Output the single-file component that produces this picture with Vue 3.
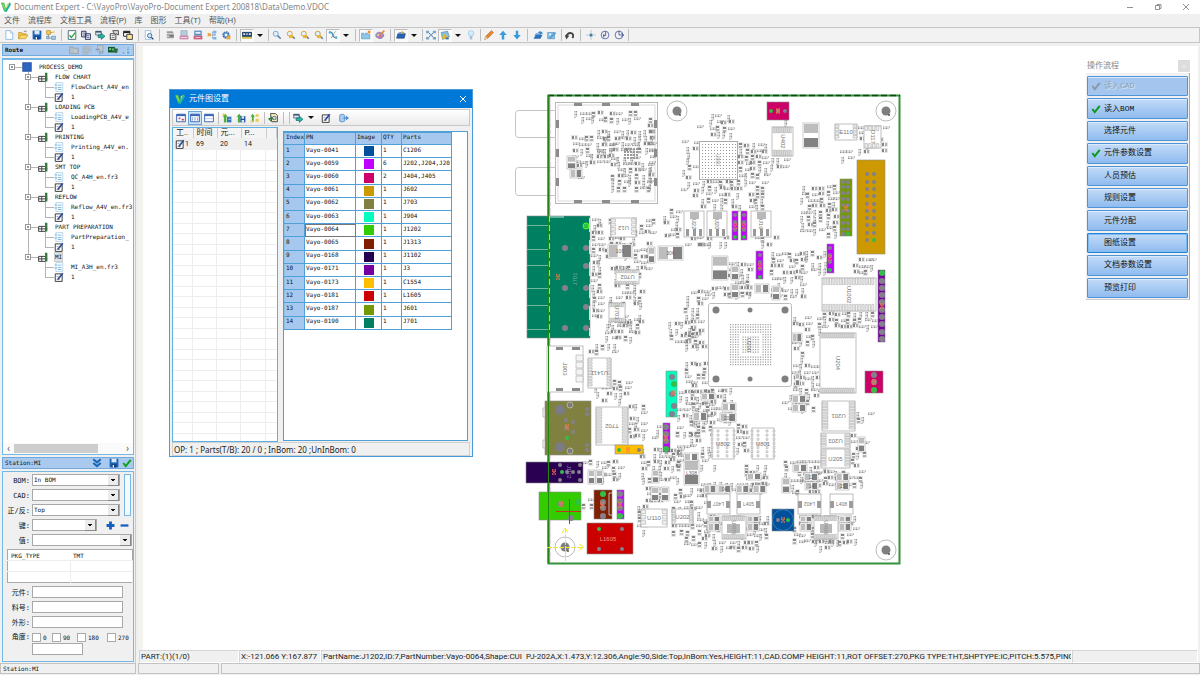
<script setup>
import { ref } from 'vue'

const menus = ['文件', '流程库', '文档工具', '流程(P)', '库', '图形', '工具(T)', '帮助(H)']

/* ---------- icons, drawn on a 16 x 16 grid ---------- */
const lens = (c, extra = '') =>
  `<circle cx="6" cy="6" r="4" fill="#e4f1fa" stroke="${c}" stroke-width="1.6"/><path d="M9 9l5 5" stroke="#5b7fa8" stroke-width="2.4"/>${extra}`
const lock = '<rect x="5" y="8" width="6" height="5" fill="#e8b53a"/>'
const icons = {
  new: '<path d="M3 1h7l4 4v10H3z" fill="#fff" stroke="#7fb2de" stroke-width="1.3"/><path d="M10 1v4h4" fill="none" stroke="#7fb2de"/>',
  open: '<path d="M1 14V4h5l1 2h6v3" fill="#f5c948" stroke="#b98a10"/><path d="M1 14l3-6h12l-4 6z" fill="#ffd966" stroke="#b98a10"/><path d="M9 3q3-3 5 0" fill="none" stroke="#444"/>',
  save: '<path d="M1 1h14v14H1z" fill="#1b63b5"/><path d="M4 1h8v6H4z" fill="#d9e9f8"/><path d="M4 10h8v5H4z" fill="#0f3f80"/><path d="M6 11h2v4H6z" fill="#fff"/>',
  flow: '<path d="M4 6v7h6M6 4h6" fill="none" stroke="#777"/><path d="M1 1h6v6H1z" fill="#f4ce50" stroke="#ad8520"/><path d="M9 10h6v5H9zM1 10h4v4H1z" fill="#a9cce8" stroke="#4d83af"/><path d="M10 2h4v3h-4z" fill="#ead27f"/>',
  check: '<path d="M2 1h12v14H2z" fill="#fff" stroke="#4d7077" stroke-width="1.5"/><path d="M4 8l3 4 6-8" fill="none" stroke="#28a03a" stroke-width="2"/>',
  copy: '<path d="M1 2h7v9H1zM7 6h8v9H7z" fill="#e4e8f4" stroke="#25305f" stroke-width="1.5"/><path d="M3 5h4M3 8h3M9 9h4M9 12h4" stroke="#25305f"/>',
  export: '<path d="M1 2h9v6H1z" fill="#d8e6f2" stroke="#29425f"/><path d="M1 2h9v2H1z" fill="#29425f"/><path d="M5 8h5V5l6 5-6 5v-3H5z" fill="#21b9a0" stroke="#155a60"/>',
  form: '<path d="M2 6h9v9H2z" fill="#fff" stroke="#333" stroke-width="1.4"/><path d="M4 9h5M4 12h5" stroke="#333"/><path d="M6 1h9v7l-3-2-3 1z" fill="#ddd" stroke="#333" stroke-width="1.3"/>',
  card: '<path d="M1 2h10v8H1z" fill="#fff" stroke="#222" stroke-width="1.5"/><path d="M1 2h10v3H1z" fill="#222"/><path d="M6 7h9v8H6z" fill="#ffe79a" stroke="#222" stroke-width="1.3"/>',
  preview: '<path d="M2 1h9v14H2z" fill="#fff" stroke="#7da6cc"/><circle cx="9" cy="9" r="3.5" fill="#cfe5f5" stroke="#2f6ca8" stroke-width="1.4"/><path d="M12 12l3 3" stroke="#20406a" stroke-width="2"/>',
  db: '<path d="M3 2h9l2 3v8H3z" fill="#9b9b9b"/><path d="M2 6h12M2 10h12" stroke="#e5e5e5" stroke-width="1.5"/><path d="M7 8h7v3H7z" fill="#777"/>',
  dbPink: '<path d="M3 1h10v8H3z" fill="#b9cce0" stroke="#8aa"/><path d="M1 9h14v6H1z" fill="#d28ab0"/><path d="M3 12h10" stroke="#fff"/>',
  pageBlue: '<path d="M2 1h12v8H2z" fill="#5a8ec6"/><path d="M4 3h8v3H4z" fill="#e8f2fb"/><path d="M1 9h14v6H1z" fill="#c7607c"/><path d="M4 12h8" stroke="#fff"/>',
  hier: '<path d="M4 8h5M9 3v11M9 3h4M9 13h4" stroke="#6e9bc5" fill="none"/><path d="M1 5h5v5H1z" fill="#f2a33c"/><path d="M10 1h5v4h-5zM10 11h5v4h-5zM10 6h4v3h-4z" fill="#7db4e2"/>',
  gear: '<circle cx="8" cy="8" r="5" fill="#5d9bd6" stroke="#3a6ca0" stroke-width="2" stroke-dasharray="2.4 1.4"/><circle cx="8" cy="8" r="2" fill="#fff"/><path d="M9 9h6v6H9z" fill="#f0a33b"/>',
  board: '<path d="M0 3h16v10H0z" fill="#2b4d75"/><path d="M2 5h3v3H2zM7 5h2v3H7zM11 5h3v3h-3z" fill="#d7e3ee"/><path d="M0 11h16v3H0z" fill="#d9c24b"/>',
  lens: lens('#7da7cf'),
  lensIn: lens('#d6a843', lock),
  lensOut: lens('#d6a843', lock),
  lensFit: lens('#c9a04b', lock),
  route: '<path d="M2 3l4 1 3 7 5 2" fill="none" stroke="#3b87b5" stroke-width="2"/><circle cx="3" cy="4" r="2" fill="#58b2d8"/><circle cx="13" cy="12" r="2" fill="#58b2d8"/><path d="M12 2L5 13" stroke="#707070"/>',
  castle: '<path d="M1 5h3v2h3V5h3v2h4v7H1z" fill="#8fc7ea" stroke="#4a92c7"/><circle cx="13" cy="3" r="2.4" fill="#f28c28"/>',
  palette: '<path d="M1 8q2-6 8-4 6 1 5 6-4 6-9 3-4-1-4-5z" fill="#a98fc8" stroke="#846b9e"/><circle cx="5" cy="8" r="1.5" fill="#f8e071"/><circle cx="9" cy="10" r="1.5" fill="#e65d5d"/><path d="M9 7l6-6" stroke="#e28b28" stroke-width="2.4"/>',
  folderBlue: '<path d="M1 13l2-7h12l-2 7z" fill="#2d62b3" stroke="#18427f"/><path d="M2 6l4-3h7v3" fill="#5f98dd"/><path d="M10 1l3 4H7z" fill="#e6b22d"/>',
  net: '<path d="M3 3l10 10M13 3L3 13" stroke="#6b7f97" stroke-width="1.6"/><path d="M0 1h5v4H0zM11 1h5v4h-5zM0 11h5v4H0zM11 11h5v4h-5zM6 6h4v4H6z" fill="#7aa6cd"/>',
  picture: '<path d="M2 4l10-2 3 9-11 4z" fill="#8ac0e4" stroke="#4a7fa5"/><path d="M3 12l4-6 3 4 3-3v5l-8 3z" fill="#e0b833"/><path d="M9 12h5v3H9z" fill="#3c73a8"/>',
  bulb: '<circle cx="8" cy="5.500" r="4.500" fill="#cfe9fa" stroke="#8cc4e8"/><path d="M6 10h4v5H6z" fill="#9fbfd4"/><path d="M6 4q2-2 4 0" stroke="#fff" fill="none"/>',
  pencil: '<path d="M1 15l2-5L12 1l3 3-9 9z" fill="#e8892b" stroke="#a8611b"/><path d="M1 15l2-5 3 3z" fill="#e8cfa0"/>',
  up: '<path d="M8 1l6 7h-4v7H6V8H2z" fill="#3a9bdc"/>',
  down: '<path d="M8 15l6-7h-4V1H6v7H2z" fill="#3a9bdc"/>',
  openBlue: '<path d="M1 14l3-6h11l-3 6z" fill="#2e70b8"/><path d="M2 8l3-3h8v3" fill="#68a6e0"/><path d="M8 4q4-4 6 0l1-2v5l-4-1" fill="#3c85c8"/>',
  sketch: '<path d="M1 4h11v10H1z" fill="#8ec3e7" stroke="#4f8cb8"/><path d="M2 13l10-10 3 2-9 9z" fill="#59a2d2"/><circle cx="5" cy="7" r="1.500" fill="#fff"/>',
  undo: '<path d="M2 11q2-7 8-6 5 2 2 8" fill="none" stroke="#444" stroke-width="3"/><path d="M0 8l7 1-5 6z" fill="#444"/>',
  cross: '<path d="M8 0v16M0 8h16" stroke="#9fb6c9"/><circle cx="8" cy="8" r="3" fill="#77b5cf"/><circle cx="8" cy="8" r="1.400" fill="#345"/>',
  rotA: '<circle cx="8" cy="8" r="6.200" fill="none" stroke="#4a5a9a" stroke-width="1.300"/><path d="M9 2v7H5M6 6v6" stroke="#4a5a9a" fill="none" stroke-width="1.400"/>',
  rotB: '<circle cx="8" cy="8" r="6.200" fill="none" stroke="#4a5a9a" stroke-width="1.300"/><path d="M8 1v7h8M12 5l3 3-3 3" stroke="#4a5a9a" fill="none" stroke-width="1.400"/>',
  root: '<path d="M1 1h14v14H1z" fill="#2c64c0" stroke="#1c4386"/>',
  station: '<path d="M1 7h11v8H1z" fill="#fff" stroke="#444" stroke-width="1.600"/><path d="M1 11h14M6 7v8" stroke="#444" stroke-width="1.600"/><path d="M11 1h4v14h-3z" fill="#357a40"/>',
  list: '<path d="M3 1h11v14H3z" fill="#fff" stroke="#8fc0e0"/><path d="M1 3h4v3H1zM1 8h4v3H1z" fill="#a9d0ea"/><path d="M6 5h6M6 9h6M6 12h6" stroke="#66a5cf" stroke-width="1.300"/>',
  edit: '<path d="M2 3h11v12H2z" fill="#fff" stroke="#333" stroke-width="1.500"/><path d="M6 12l8-10" stroke="#2d4f9e" stroke-width="3"/><path d="M4 7h3M4 12h5" stroke="#666"/>',
  folderGrey: '<path d="M1 3h5l1 2h8v9H1z" fill="#b5bfc9" stroke="#8796a5"/><path d="M8 8l5 4" stroke="#eee"/>',
  gridGrey: '<path d="M1 2h4v4H1zM6 2h4v4H6zM11 2h4v4h-4zM1 7h4v4H1zM6 7h4v4H6zM11 7h4v4h-4zM1 12h4v3H1zM6 12h4v3H6z" fill="#b9c2cb" stroke="#9aa8b6" stroke-width=".6"/>',
  pageGrey: '<path d="M4 1h9v9H4z" fill="#bec9d4" stroke="#8a9bab"/><path d="M1 7h7M8 10v5M12 10v4" stroke="#8a9bab" stroke-width="2"/>',
  chip: '<path d="M0 3h11v9H0z" fill="#155c2a"/><path d="M2 5h3v3H2zM7 5h2v4H7z" fill="#8fd296"/><path d="M11 5l5 1-1 6-4 1z" fill="#2c6f36"/>',
  tower: '<path d="M2 8h4v7H2zM9 2h5v13H9z" fill="#63abdb" stroke="#e6f3fb" stroke-width=".8"/><path d="M3 10h2M10 5h3M10 9h3" stroke="#fff"/>',
  winRed: '<path d="M1 2h14v12H1z" fill="#fff" stroke="#3963b5" stroke-width="1.500"/><path d="M1 2h14v3H1z" fill="#3963b5"/><path d="M4 7h3v3H4zM9 9h4v3H9z" fill="#c45566"/>',
  winGrid: '<path d="M1 2h14v12H1z" fill="#fff" stroke="#3963b5" stroke-width="1.500"/><path d="M1 2h14v3H1z" fill="#3963b5"/><path d="M3 8h10M3 11h10" stroke="#3963b5" stroke-width="1.400" stroke-dasharray="2 2"/>',
  win: '<path d="M1 2h14v12H1z" fill="#fff" stroke="#3963b5" stroke-width="1.500"/><path d="M1 2h14v3H1z" fill="#3963b5"/><path d="M2 9h12" stroke="#9db7e3"/>',
  treeGo: '<path d="M3 15V6H1l4-5 4 5H7v9z" fill="#4cae3b"/><path d="M8 6h7v9H8z" fill="#3474b8"/><path d="M10 10h4" stroke="#fff"/><path d="M1 1h3v3H1z" fill="#e7c43c"/>',
  treeSave: '<path d="M3 15V6H1l4-5 4 5H7v9z" fill="#4cae3b"/><path d="M7 5h8v10H7z" fill="#1b4f9c"/><path d="M9 5h4v4H9zM9 11h4v4H9z" fill="#dce8f6"/>',
  treeList: '<path d="M3 14V6H1l3-5 4 5H6v8z" fill="#4cae3b"/><path d="M9 2h5v4H9zM9 9h5v5H9z" fill="#e7cc54"/><path d="M1 12h4v3H1z" fill="#e7cc54"/>',
  pageFind: '<path d="M4 1h8l3 3v10H6z" fill="#fff6c8" stroke="#333" stroke-width="1.400"/><circle cx="10" cy="8" r="3" fill="#bfe0ee" stroke="#333"/><path d="M1 9h6l-3-3M1 9l4 4" stroke="#2f7d3b" stroke-width="2" fill="none"/>',
  out: '<path d="M1 4q0-2 4-2t4 2v9q-4 3-8 0z" fill="#a9cdf0" stroke="#4379b5"/><path d="M7 7h4V4l5 4-5 4V9H7z" fill="#4a8fd6"/>',
  logo: '<path d="M0 1h5l3 10-3 4z" fill="#35b34a"/><path d="M5 15L14 0l2 4-7 12z" fill="#1fb7a2"/><path d="M1 3l5 10 2-2L4 2z" fill="#7bd85f"/><path d="M9 4l4-3-4 9z" fill="#f2d33d"/>',
  tick: '<path d="M2 8l4 5 8-10" fill="none" stroke="currentColor" stroke-width="3.200"/>',
  chevrons: '<path d="M2 2l6 5 6-5M2 8l6 5 6-5" fill="none" stroke="#1767b5" stroke-width="3.200"/>',
  plus: '<path d="M8 1v14M1 8h14" stroke="#145fbd" stroke-width="5"/>',
  minus: '<path d="M1 8h14" stroke="#145fbd" stroke-width="4"/>'
}

const tools = [
  'new', 'open', 'save', 'flow', '|', 'check', 'copy', 'export', 'form', 'card', '|', 'preview', '|',
  'db', 'dbPink', 'pageBlue', 'hier', 'gear', '|', '*board', 'v', '/', 'lens', 'lensIn', 'lensOut', 'lensFit', '*route', 'v', '|',
  '*castle', 'palette', '|', '*folderBlue', 'v', '/', 'net', '*picture', 'v', 'bulb', '/', 'pencil', 'up', 'down', '|',
  'openBlue', 'sketch', '/', 'undo', '|', 'cross', 'rotA', 'rotB', '/'
]
const dialogTools = ['winRed', '*winGrid', 'win', '/', 'treeGo', 'treeSave', 'treeList', '/', 'pageFind', '|', '/', 'export', 'v', 'edit', 'out']

/* ---------- process tree ---------- */
const stations = [
  ['FLOW CHART', 'FlowChart_A4V_en'],
  ['LOADING PCB', 'LoadingPCB_A4V_e'],
  ['PRINTING', 'Printing_A4V_en.'],
  ['SMT TOP', 'QC_A4H_en.fr3'],
  ['REFLOW', 'Reflow_A4V_en.fr3'],
  ['PART PREPARATION', 'PartPreparation_'],
  ['MI', 'MI_A3H_en.fr3']
]
const tree = [{ level: 0, icon: 'root', text: 'PROCESS_DEMO' }]
stations.forEach(([name, file], i) => {
  const last = i === stations.length - 1
  tree.push({ level: 1, icon: 'station', text: name, last, selected: last })
  tree.push({ level: 2, icon: 'list', text: file, last })
  tree.push({ level: 2, icon: 'edit', text: '1', last, end: true })
})
const indent = [19, 35, 51]
function treeLines(n) {
  if (n.level === 0) return 'M12 5.500h8'
  if (n.level === 1) return `M25.500 0V${n.last ? 5 : 10}M28 5.500h8`
  return (n.last ? '' : 'M25.500 0V10') + `M42.500 0V${n.end ? 5 : 10}M42 5.500h9`
}

const steps = [
  ['读入CAD', 'off'], ['读入BOM', 'done'], ['选择元件', ''], ['元件参数设置', 'done'], ['人员预估', ''],
  ['规则设置', ''], ['元件分配', ''], ['图纸设置', 'focus'], ['文档参数设置', ''], ['预览打印', '']
]

const parts = [
  ['Vayo-0041', '#00509c', 1, 'C1206'], ['Vayo-0059', '#bf00ff', 6, 'J202,J204,J20'],
  ['Vayo-0060', '#cc0066', 2, 'J404,J405'], ['Vayo-0061', '#cc9900', 1, 'J602'],
  ['Vayo-0062', '#808040', 1, 'J703'], ['Vayo-0063', '#00ffbf', 1, 'J904'],
  ['Vayo-0064', '#33cc00', 1, 'J1202'], ['Vayo-0065', '#802000', 1, 'J1313'],
  ['Vayo-0168', '#260050', 1, 'J1102'], ['Vayo-0171', '#7500a0', 1, 'J3'],
  ['Vayo-0173', '#ffbf00', 1, 'C1554'], ['Vayo-0181', '#cc0000', 1, 'L1605'],
  ['Vayo-0187', '#739900', 1, 'J601'], ['Vayo-0190', '#008060', 1, 'J701']
]

const bom = ref('In BOM')
const side = ref('Top')

/* ---------- board drawing ---------- */
let seed = 7
const rnd = () => (seed = (seed * 16807) % 2147483647) / 2147483647
const small = { pads: '', light: '', marks: '', outline: '' }
const fields = [
  [573, 111, 64, 14, .6], [595, 130, 58, 26, .8], [572, 136, 40, 32, .6], [610, 156, 44, 38, .65], [648, 118, 8, 70, .9], [570, 157, 14, 28, .3],
  [591, 218, 12, 104, .75], [608, 218, 52, 24, .35], [604, 242, 50, 28, .5], [608, 266, 36, 62, .5], [604, 318, 38, 22, .55],
  [663, 209, 18, 30, .6], [680, 140, 20, 62, .45], [690, 119, 14, 12, .4], [709, 114, 22, 24, .6], [738, 143, 32, 34, .75], [700, 180, 66, 28, .55],
  [770, 158, 20, 12, .5], [783, 120, 18, 30, .3], [800, 186, 24, 50, .7], [826, 184, 12, 52, .9], [858, 125, 30, 28, .4], [840, 150, 12, 14, .5],
  [700, 236, 32, 14, .6], [754, 236, 22, 10, .6], [684, 236, 26, 14, .5], [704, 286, 46, 14, .6], [728, 262, 26, 38, .5], [770, 252, 36, 46, .65],
  [804, 250, 22, 24, .5], [852, 258, 24, 18, .5], [822, 312, 54, 17, .65], [792, 316, 28, 28, .4], [793, 346, 14, 20, .3], [792, 364, 28, 30, .5],
  [684, 290, 22, 60, .4], [668, 322, 36, 22, .5], [684, 362, 22, 24, .6], [678, 384, 16, 30, .5], [690, 390, 24, 48, .6],
  [588, 344, 30, 12, .5], [594, 380, 34, 26, .65], [628, 404, 16, 38, .45], [650, 424, 12, 18, .4], [676, 408, 26, 50, .5],
  [582, 460, 40, 26, .45], [582, 492, 10, 20, .4], [640, 448, 40, 38, .6], [645, 486, 26, 20, .45], [636, 505, 10, 30, .5],
  [672, 488, 34, 58, .55], [700, 446, 16, 22, .6], [704, 388, 30, 36, .45], [736, 424, 14, 32, .45], [782, 394, 36, 20, .4],
  [855, 405, 16, 24, .35], [850, 434, 16, 32, .5], [744, 464, 26, 30, .5], [784, 460, 34, 36, .45], [700, 482, 66, 12, .6], [798, 464, 66, 26, .45],
  [704, 515, 64, 24, .55], [798, 515, 60, 28, .55], [712, 540, 48, 14, .5], [812, 540, 36, 14, .5], [786, 526, 14, 16, .4], [670, 452, 14, 30, .4]
]
for (const [fx, fy, fw, fh, p] of fields) {
  for (let y = fy; y < fy + fh - 3; y += 6) {
    for (let x = fx; x < fx + fw - 3; x += 6) {
      const r = rnd()
      if (r > p + .22) continue
      const k = rnd()
      const dx = x + Math.round(rnd() * 2)
      const dy = y + Math.round(rnd())
      if (k < .22) {
        small.pads += `M${dx} ${dy}h2v3h-2z`
        small.light += `M${dx + 3} ${dy}h2v3h-2z`
        small.outline += `M${dx - .5} ${dy - .5}h6v4h-6z`
      } else if (k < .42) {
        small.pads += `M${dx} ${dy}h3v2h-3z`
        small.light += `M${dx} ${dy + 3}h3v2h-3z`
        small.outline += `M${dx - .5} ${dy - .5}h4v6h-4z`
      } else if (k < .72) small.marks += `M${dx} ${dy + 1}h7M${dx} ${dy + 2.6}h6`
      else small.marks += `M${dx + 1} ${dy}v7M${dx + 2.600} ${dy}v6`
    }
  }
}

/* x, y, w, h, label, rotation, pin sides (h: top+bottom, v: left+right), pin count */
const chips = [
  [611, 218, 25, 19, 'U12', 180, 'v', 4], [616, 270, 23, 14, 'U702', 180, 'h', 9], [609, 303, 16, 19, 'U703', 90, 'h', 7],
  [684, 211, 20, 26, 'U22', 90, 'b', 3], [707, 211, 20, 26, 'U20', 90, 'b', 3], [751, 211, 20, 26, 'U19', 90, 'b', 3],
  [772, 127, 21, 29, 'U402', 90, 'h', 9], [835, 124, 22, 16, 'E110', 0, 'v', 4], [864, 126, 17, 22, 'D117', 90, 'h', 4],
  [822, 278, 54, 33, 'U1002', 90, 'h', 16], [820, 333, 36, 60, 'U204', 90, 't', 17], [822, 401, 33, 30, 'U201', 180, 'v', 10],
  [821, 433, 29, 15, 'U203', 180, 'v', 5], [821, 449, 29, 19, 'U205', 0, 'v', 6], [596, 407, 32, 38, 'T702', 180, 'v', 12],
  [588, 358, 23, 30, 'U1411', 180, 'v', 9], [547, 346, 36, 46, 'J903', 90, '', 0],
  [712, 428, 22, 31, 'U802', 0, 'd', 7], [752, 428, 22, 31, 'U801', 0, 'd', 7],
  [722, 516, 24, 23, 'U405', 90, 'h', 11], [814, 516, 24, 23, 'U406', 90, 'h', 11],
  [641, 509, 26, 18, 'U110', 0, 'v', 3], [672, 509, 21, 15, 'U202', 0, 'v', 5]
]
function pins([x, y, w, h, , , s, n]) {
  let d = ''
  for (let i = 0; i < n; i++) {
    if (s === 'h' || s === 't') {
      const px = x + 1 + i * (w - 2) / n
      const len = s === 't' ? 5 : h * .2
      d += `M${px} ${y}h${w / n * .6}v${len}h${-w / n * .6}zM${px} ${y + h}h${w / n * .6}v${-len}h${-w / n * .6}z`
    } else if (s === 'v') {
      const py = y + 1 + i * (h - 2) / n
      d += `M${x} ${py}v${h / n * .6}h${w * .18}v${-h / n * .6}zM${x + w} ${py}v${h / n * .6}h${-w * .18}v${-h / n * .6}z`
    } else if (s === 'd') {
      const py = y + 2 + i * (h - 2) / n
      d += `M${x - 1} ${py}h2v2h-2zM${x + 5} ${py}h2v2h-2zM${x + 14} ${py}h2v2h-2zM${x + w - 1} ${py}h2v2h-2z`
    }
  }
  return d
}
/* two-terminal parts: x, y, w, h, direction of the terminals, label */
const caps = [
  [608, 244, 24, 14, 'x', '100'], [658, 246, 25, 14, 'x', '306'], [803, 123, 16, 25, 'y', ''], [712, 256, 16, 24, 'y', ''],
  [684, 460, 15, 25, 'y', 'L308'], [567, 156, 9, 13, 'y', ''], [570, 169, 12, 9, 'x', ''], [648, 247, 7, 16, 'y', ''],
  [731, 266, 8, 14, 'y', ''], [755, 284, 14, 9, 'x', ''], [772, 286, 8, 14, 'y', ''], [731, 284, 8, 14, 'y', ''],
  [722, 403, 14, 8, 'x', ''], [720, 413, 16, 9, 'x', '200'], [792, 395, 14, 8, 'x', ''], [792, 404, 14, 8, 'x', ''],
  [701, 393, 14, 7, 'x', ''], [693, 412, 14, 9, 'x', ''], [684, 453, 14, 8, 'x', ''], [588, 470, 7, 14, 'y', ''], [596, 470, 7, 14, 'y', ''],
  [651, 487, 8, 14, 'y', ''], [661, 487, 8, 14, 'y', ''], [652, 470, 7, 13, 'y', ''], [793, 464, 14, 8, 'x', ''],
  [804, 473, 14, 8, 'x', '11'], [805, 482, 13, 8, 'x', '14'], [836, 473, 13, 8, 'x', ''], [836, 482, 13, 8, 'x', '15'],
  [858, 437, 7, 15, 'y', ''], [704, 485, 12, 8, 'x', ''], [718, 485, 13, 8, 'x', '04'], [736, 485, 13, 8, 'x', ''], [753, 485, 13, 8, 'x', ''],
  [782, 478, 8, 15, 'y', ''], [747, 473, 14, 7, 'x', ''], [708, 516, 12, 6, 'x', ''], [708, 523, 12, 8, 'x', ''], [747, 516, 12, 6, 'x', ''],
  [747, 523, 12, 8, 'x', ''], [800, 516, 12, 6, 'x', ''], [800, 523, 12, 8, 'x', ''], [839, 516, 12, 6, 'x', ''], [839, 523, 12, 8, 'x', ''],
  [795, 373, 5, 13, 'y', ''], [792, 333, 10, 9, 'x', '']
]
const coils = [[707, 494, 23, 20, 'L407', 180], [737, 494, 23, 20, 'L405', 0], [798, 494, 23, 20, 'L402', 180], [830, 494, 23, 20, 'L408', 0]]

function grid(x, y, w, h, step, size, hollow) {
  let d = ''
  for (let i = x; i <= x + w; i += step) {
    for (let j = y; j <= y + h; j += step) {
      if (hollow) {
        const a = Math.abs(i - x - w / 2), b = Math.abs(j - y - h / 2)
        if (Math.max(a, b) > 9 && Math.max(a, b) < 11) continue
      }
      d += `M${i} ${j}h${size}v${size}h-${size}z`
    }
  }
  return d
}

const column = (x, ys) => ys.map(y => [x, y])
/* x, y, w, h, fill, pad radius, pads; the last pad is the highlighted pin one */
const blocks = [
  [527, 216, 63, 122, '#008060', 3, [[565, 248], [565, 288], [586, 248], [586, 266], [586, 288], [586, 307], [565, 328], [586, 328], [586, 226]]],
  [545, 401, 46, 54, '#808040', 2, [[573, 422], [573, 432], [566, 420], [566, 428], [587, 409], [587, 414], [587, 445], [587, 450], [567, 438]]],
  [526, 462, 57, 21, '#2a0052', 2, [[560, 465], [580, 465], [560, 480], [580, 480], [567, 472], [573, 472], [579, 472], [562, 472]]],
  [539, 492, 42, 28, '#33cc00', 3, [[561, 504], [571, 518], [578, 502]]],
  [594, 490, 18, 29, '#802000', 3, column(603, [502, 508, 516, 494])],
  [617, 490, 7, 29, '#bf00ff', 3, column(620, [494, 501, 508, 516])],
  [587, 523, 46, 31, '#cc0000', 2, [[622, 529], [599, 549], [622, 549], [599, 529]]],
  [615, 445, 28, 9, '#ffbf00', 2, [[639, 450], [619, 450]]],
  [666, 371, 11, 46, '#00ffbf', 3, [[672, 377], [672, 394], [674, 406], [672, 414], [674, 384]]],
  [663, 423, 7, 29, '#bf00ff', 3, column(666, [427, 434, 441, 449])],
  [767, 102, 22, 18, '#cc0066', 2, [[778, 111], [785, 111], [771, 111]]],
  [732, 211, 6, 29, '#bf00ff', 2, column(735, [215, 222, 230, 237])],
  [741, 211, 6, 29, '#bf00ff', 2, column(744, [215, 222, 230, 237])],
  [756, 251, 7, 28, '#bf00ff', 2, column(760, [255, 262, 269, 277])],
  [827, 244, 7, 29, '#bf00ff', 2, column(830, [248, 255, 262, 270])],
  [840, 179, 12, 57, '#739900', 2, [...column(843, [182, 187, 193, 199, 205, 211, 217, 223, 229, 234]), ...column(848, [182, 187, 193, 199, 205, 211, 217, 223, 229, 234])]],
  [857, 160, 28, 94, '#cc9900', 2, [...column(867, [174, 182, 189, 196, 204, 211, 218, 225, 233, 240]), ...column(874, [174, 182, 189, 196, 204, 211, 218, 225, 233, 240])]],
  [878, 270, 7, 72, '#7500a0', 3, column(882, [281, 288, 295, 302, 310, 317, 324, 332, 339, 273])],
  [865, 371, 18, 22, '#cc0066', 3, column(874, [375, 382, 390])],
  [772, 509, 22, 22, '#00509c', 2, [[778, 520], [788, 520]]]
]
const orange = [[558, 277], [567, 427], [554, 472], [561, 504], [602, 505], [620, 505], [628, 450], [673, 393], [666, 438], [778, 111], [735, 226], [744, 226], [760, 266], [830, 258], [846, 208], [870, 207], [882, 306], [874, 382], [783, 520]]
const mounts = [[677, 111], [886, 111], [886, 550], [565, 547]]
</script>

<template>
  <div class="app">
    <header class="titlebar">
      <svg class="ico" viewBox="0 0 16 16" v-html="icons.logo"></svg>
      <h1>Document Expert - C:\VayoPro\VayoPro-Document Expert 200818\Data\Demo.VDOC</h1>
      <div class="winbtns">
        <button aria-label="Minimize"><svg viewBox="0 0 8 8"><path d="M1 4.500h6" /></svg></button>
        <button aria-label="Restore"><svg viewBox="0 0 8 8"><path d="M1.500 2.500h4v4h-4zM3 2.500v-1h4v4H5.500" /></svg></button>
        <button aria-label="Close"><svg viewBox="0 0 8 8"><path d="M1 1l6 6M7 1L1 7" /></svg></button>
      </div>
    </header>
    <nav class="menubar"><button v-for="m in menus" :key="m">{{ m }}</button></nav>
    <div class="toolbar">
      <template v-for="(t, i) in tools" :key="i">
        <span v-if="t === '|' || t === '/'" class="sep" :class="{ slim: t === '/' }"></span>
        <button v-else-if="t === 'v'" class="caret" aria-label="More"></button>
        <button v-else class="tool" :class="{ pressed: t[0] === '*' }" :aria-label="t.replace('*', '')">
          <svg class="ico" viewBox="0 0 16 16" v-html="icons[t.replace('*', '')]"></svg>
        </button>
      </template>
    </div>

    <div class="main">
      <aside class="side">
        <div class="bar">
          <span>Route</span>
          <i></i>
          <button v-for="n in ['folderGrey', 'gridGrey', 'pageGrey', 'chip', 'tower']" :key="n" :aria-label="n"><svg class="ico" viewBox="0 0 16 16" v-html="icons[n]"></svg></button>
        </div>
        <div class="treebox">
          <ul class="tree">
            <li v-for="(n, i) in tree" :key="i">
              <svg class="lines" :width="indent[n.level]" height="10">
                <path :d="treeLines(n)" stroke="#b4b4b4" fill="none" />
                <g v-if="n.level < 2" :transform="n.level ? 'translate(16 0)' : ''">
                  <rect x="6.500" y="2.500" width="5" height="5" fill="#fff" stroke="#999" /><path d="M8 5h2" stroke="#333" />
                </g>
              </svg>
              <svg class="ico" viewBox="0 0 16 16" v-html="icons[n.icon]"></svg>
              <span :class="{ selected: n.selected }">{{ n.text }}</span>
            </li>
          </ul>
          <div class="hscroll"><span>‹</span><b></b><span>›</span></div>
        </div>
        <div class="bar station">
          <span>Station:MI</span>
          <i></i>
          <button class="wide" aria-label="Collapse"><svg class="ico" viewBox="0 0 16 16" v-html="icons.chevrons"></svg></button>
          <button aria-label="Save"><svg class="ico" viewBox="0 0 16 16" v-html="icons.save"></svg></button>
          <button class="green" aria-label="Apply"><svg class="ico" viewBox="0 0 16 16" v-html="icons.tick"></svg></button>
        </div>
        <form class="form" @submit.prevent>
          <div class="top">
            <div class="rows">
              <div class="row"><label for="bom">BOM:</label><span class="sel"><select id="bom" v-model="bom"><option>In BOM</option></select></span></div>
              <div class="row"><label for="cad">CAD:</label><span class="sel"><select id="cad"><option></option></select></span></div>
              <div class="row"><label for="face">正/反:</label><span class="sel"><select id="face" v-model="side"><option>Top</option></select></span></div>
            </div>
            <div class="vtrack"></div>
          </div>
          <div class="row">
            <label for="key">键:</label><span class="sel"><select id="key"><option></option></select></span>
            <span class="pm">
              <button type="button" aria-label="Add"><svg class="ico" viewBox="0 0 16 16" v-html="icons.plus"></svg></button>
              <button type="button" aria-label="Remove"><svg class="ico" viewBox="0 0 16 16" v-html="icons.minus"></svg></button>
            </span>
          </div>
          <div class="row"><label for="val">值:</label><span class="sel"><select id="val"><option></option></select></span></div>
          <table class="props">
            <thead><tr><th>PKG_TYPE</th><th>TMT</th></tr></thead>
            <tbody><tr><td></td><td></td></tr><tr><td></td><td></td></tr></tbody>
          </table>
          <div class="row short"><label for="part">元件:</label><input id="part" type="text" /></div>
          <div class="row short"><label for="pn">料号:</label><input id="pn" type="text" /></div>
          <div class="row short"><label for="shape">外形:</label><input id="shape" type="text" /></div>
          <div class="row angles">
            <span class="lbl">角度:</span>
            <label v-for="a in [0, 90, 180, 270]" :key="a"><input type="checkbox" />{{ a }}</label>
          </div>
          <div class="row last"><span></span><input type="text" aria-label="角度" /></div>
        </form>
      </aside>

      <section class="work">
        <div class="canvas">
          <svg class="pcb" viewBox="510 86 400 486" width="400" height="486" font-family="Liberation Sans, sans-serif" font-size="5">
            <g fill="none" stroke="#c4c4c4" stroke-width="1">
              <rect x="515.500" y="110.500" width="44" height="27" rx="3" /><rect x="515.500" y="167.500" width="44" height="28" rx="3" />
            </g>
            <rect x="548.500" y="95.500" width="351" height="468" fill="none" stroke="#35913a" stroke-width="2" />
            <path d="M548 95.500h352" stroke="#0a4a12" stroke-width="1.500" stroke-dasharray="6 3" />
            <path d="M548.500 95v468" stroke="#1d8a0c" stroke-width="2" />
            <path d="M550 97v465" stroke="#d88ad8" stroke-dasharray="5 1.500" stroke-width=".8" />
            <rect x="555.500" y="102.500" width="102" height="101" fill="#fff" stroke="#b8b8b8" />
            <rect x="558" y="105" width="97" height="96" fill="none" stroke="#cfcfcf" stroke-width=".8" />
            <path d="M574 103h8v3h-8zM602 103h8v3h-8zM631 103h8v3h-8zM574 200h8v3h-8zM602 200h8v3h-8zM631 200h8v3h-8zM556 120h3v8h-3zM556 149h3v8h-3zM556 178h3v8h-3zM654 120h3v8h-3zM654 149h3v8h-3zM654 178h3v8h-3z" fill="#8c8c8c" />

            <path :d="small.outline" fill="none" stroke="#ccc" stroke-width=".5" />
            <path :d="small.light" fill="#b0b0b0" />
            <path :d="small.pads" fill="#858585" />
            <path :d="small.marks" fill="none" stroke="#8a8a8a" stroke-width="1" stroke-dasharray="1 .5" />
            <path :d="grid(624, 148, 12, 10, 3, 2)" fill="#9a9a9a" />

            <g v-for="(c, i) in caps" :key="'c' + i">
              <rect :x="c[0]" :y="c[1]" :width="c[2]" :height="c[3]" fill="#fff" stroke="#aaa" stroke-width=".6" />
              <template v-if="c[4] === 'x'">
                <rect :x="c[0] + 1" :y="c[1] + 1" :width="c[2] * .36" :height="c[3] - 2" fill="#bdbdbd" />
                <rect :x="c[0] + c[2] * .64 - 1" :y="c[1] + 1" :width="c[2] * .36" :height="c[3] - 2" fill="#828282" />
              </template>
              <template v-else>
                <rect :x="c[0] + 1" :y="c[1] + 1" :width="c[2] - 2" :height="c[3] * .36" fill="#bdbdbd" />
                <rect :x="c[0] + 1" :y="c[1] + c[3] * .64 - 1" :width="c[2] - 2" :height="c[3] * .36" fill="#828282" />
              </template>
              <text v-if="c[5]" :x="c[0] + c[2] / 2" :y="c[1] + c[3] / 2 + 2" text-anchor="middle" fill="#666">{{ c[5] }}</text>
            </g>

            <g v-for="(c, i) in chips" :key="'u' + i">
              <rect :x="c[0]" :y="c[1]" :width="c[2]" :height="c[3]" fill="#fff" stroke="#b0b0b0" stroke-width=".8" />
              <path :d="pins(c)" fill="#efefef" stroke="#a0a0a0" stroke-width=".5" />
              <template v-if="c[6] === 'b'">
                <rect :x="c[0] + 6" :y="c[1] + 1" width="9" height="7" fill="#b9b9b9" />
                <path :d="`M${c[0] + 2} ${c[1] + 18}h3v7h-3zM${c[0] + 9} ${c[1] + 18}h3v7h-3zM${c[0] + 15} ${c[1] + 18}h3v7h-3z`" fill="#9a9a9a" />
              </template>
              <text :transform="`translate(${c[0] + c[2] / 2} ${c[1] + c[3] / 2}) rotate(${c[5]})`" y="2" text-anchor="middle" font-size="6" fill="#757575">{{ c[4] }}</text>
            </g>
            <path d="M556 347h7v3h-7zM572 347h8v3h-8zM556 388h7v3h-7zM572 388h8v3h-8z" fill="#8c8c8c" />
            <path d="M576 355h7v6h-7zM576 362h7v6h-7zM576 369h7v6h-7zM576 376h7v6h-7z" fill="#f4f4f4" stroke="#aaa" stroke-width=".6" />
            <rect x="727" y="524" width="13" height="9" fill="#999" opacity=".7" /><rect x="820" y="524" width="12" height="9" fill="#999" opacity=".7" />

            <g v-for="(c, i) in coils" :key="'l' + i">
              <rect :x="c[0]" :y="c[1]" :width="c[2]" :height="c[3]" fill="#fff" stroke="#aaa" stroke-width=".8" />
              <rect :x="c[0]" :y="c[1] + 7" width="4" height="7" fill="#9c9c9c" /><rect :x="c[0] + c[2] - 4" :y="c[1] + 7" width="4" height="7" fill="#9c9c9c" />
              <text :transform="`translate(${c[0] + c[2] / 2} ${c[1] + 10}) rotate(${c[5]})`" y="2" text-anchor="middle" fill="#777">{{ c[4] }}</text>
            </g>

            <rect x="699.500" y="141.500" width="38" height="38" fill="#fff" stroke="#aaa" />
            <path :d="grid(702, 144, 33, 33, 3, 1)" fill="#9a9a9a" />
            <text transform="translate(718 160) rotate(90)" y="2" text-anchor="middle" fill="#888">U300</text>
            <rect x="708.500" y="303.500" width="83" height="83" rx="2" fill="#fff" stroke="#bdbdbd" />
            <path :d="grid(730, 324, 40, 40, 2.500, 1.200, true)" fill="#a2a2a2" />
            <text transform="translate(749 345) rotate(90)" y="2" text-anchor="middle" font-size="6" fill="#777">U200</text>
            <g fill="#7f7f7f">
              <circle cx="716" cy="310" r="3.500" /><circle cx="750" cy="310" r="2.500" /><circle cx="785" cy="310" r="3.500" />
              <circle cx="716" cy="379" r="3.500" /><circle cx="750" cy="379" r="2.500" /><circle cx="785" cy="379" r="3.500" />
            </g>

            <g v-for="(m, i) in mounts" :key="'m' + i">
              <circle :cx="m[0]" :cy="m[1]" r="10" fill="#fff" stroke="#aaa" stroke-width=".8" /><circle :cx="m[0]" :cy="m[1]" r="4.500" fill="#7f7f7f" />
              <circle :cx="m[0] + 3" :cy="m[1] + 4" r="1" fill="#555" />
            </g>

            <g v-for="(b, i) in blocks" :key="'b' + i">
              <rect :x="b[0]" :y="b[1]" :width="b[2]" :height="b[3]" :fill="b[4]" stroke="#8d8d8d" stroke-width=".6" />
              <circle v-if="b[4] === '#00509c'" :cx="783" :cy="520" r="10.500" fill="none" stroke="#4d86bd" stroke-width=".8" />
              <circle v-for="(p, j) in b[6]" :key="j" :cx="p[0]" :cy="p[1]" :r="b[5]" :fill="j === b[6].length - 1 ? '#2fc045' : '#84808c'" />
            </g>
            <path d="M527 225.500h21M527 249.500h21M527 265.500h21M527 288.500h21M527 305.500h21M527 329.500h21" stroke="#6fb89f" />
            <path d="M550 217h14M589.500 218v118" stroke="#c9e6dc" stroke-dasharray="14 8" />
            <path d="M549.500 216v122" stroke="#9cd0b0" stroke-dasharray="6 3" /><path d="M548.500 216v305" stroke="#1d8a0c" stroke-width="1" />
            <g fill="#7c7c86"><circle cx="560" cy="410" r="5" /><circle cx="560" cy="447" r="5" /><circle cx="570" cy="405" r="3" stroke="#b5b58c" /><circle cx="570" cy="451" r="3" stroke="#b5b58c" /></g>
            <path d="M545 408h-2v9h2M545 440h-2v8h2M612 493h-3v22h3" fill="none" stroke="#bbb" />
            <circle cx="586" cy="226" r="3" fill="none" stroke="#4cff20" />
            <g fill="#ff7a45" opacity=".65">
              <path v-for="(o, i) in orange" :key="'o' + i" :d="`M${o[0] - 2} ${o[1] - 3}h1.500v2h1v-2h1.500v3h-1v1h1v2h-1.500v-2h-1v2h-1.500v-2h1v-1h-1z`" />
            </g>
            <text transform="translate(575 279) rotate(-90)" y="2" text-anchor="middle" font-size="6" fill="#7fa79a">J701</text>
            <text transform="translate(569 472) rotate(90)" y="2" text-anchor="middle" fill="#9a8ab5">J1102</text>
            <text x="608" y="541" text-anchor="middle" font-size="6" fill="#ef9a84">L1605</text>
            <path d="M556 511.500h25M569.500 499v25" stroke="#c8321a" stroke-width="1" />
            <path d="M547 547.500h36M565.500 528v33M562 533l3-5 3 5M579 544l5 3-5 3" fill="none" stroke="#f3ea1e" stroke-dasharray="5 1" />
          </svg>

          <section class="dialog" role="dialog" aria-label="元件图设置">
            <header><svg class="ico" viewBox="0 0 16 16" v-html="icons.logo"></svg><h2>元件图设置</h2><button aria-label="Close"><svg viewBox="0 0 8 8"><path d="M1 1l6 6M7 1L1 7" /></svg></button></header>
            <div class="dtools">
              <template v-for="(t, i) in dialogTools" :key="i">
                <span v-if="t === '|' || t === '/'" class="sep" :class="{ slim: t === '/' }"></span>
                <button v-else-if="t === 'v'" class="caret" aria-label="More"></button>
                <button v-else class="tool" :class="{ pressed: t[0] === '*' }" :aria-label="t.replace('*', '')"><svg class="ico" viewBox="0 0 16 16" v-html="icons[t.replace('*', '')]"></svg></button>
              </template>
            </div>
            <div class="dbody">
              <div class="ops">
                <table>
                  <thead><tr><th>工..</th><th>时间</th><th>元...</th><th>P...</th><th></th></tr></thead>
                  <tbody><tr><td><svg class="ico" viewBox="0 0 16 16" v-html="icons.edit"></svg>1</td><td>69</td><td>20</td><td>14</td><td></td></tr></tbody>
                </table>
                <div class="blank"><i></i><i></i><i></i><i></i></div>
              </div>
              <div class="partsbox">
                <table>
                  <thead><tr><th>Index</th><th>PN</th><th>Image</th><th>QTY</th><th>Parts</th></tr></thead>
                  <tbody>
                    <tr v-for="(p, i) in parts" :key="p[0]">
                      <th>{{ i + 1 }}</th><td :class="{ current: i === 6 }">{{ p[0] }}</td><td class="img"><b :style="{ background: p[1] }"></b></td><td>{{ p[2] }}</td><td>{{ p[3] }}</td>
                    </tr>
                  </tbody>
                </table>
              </div>
            </div>
            <footer>OP: 1 ; Parts(T/B): 20 / 0 ; InBom: 20 ;UnInBom: 0</footer>
          </section>

          <section class="steps">
            <header><h2>操作流程</h2><button aria-label="Close">×</button></header>
            <div class="list">
              <button v-for="s in steps" :key="s[0]" :class="s[1]" :disabled="s[1] === 'off'">
                <svg class="ico" viewBox="0 0 16 16" v-html="s[1] === 'done' || s[1] === 'off' ? icons.tick : ''"></svg>{{ s[0] }}
              </button>
            </div>
          </section>
        </div>
        <div class="info">
          <span>PART:(1)(1/0)</span><span>X:-121.066 Y:167.877</span>
          <span>PartName:J1202,ID:7,PartNumber:Vayo-0064,Shape:CUI&nbsp; PJ-202A,X:1.473,Y:12.306,Angle:90,Side:Top,InBom:Yes,HEIGHT:11,CAD.COMP HEIGHT:11,ROT OFFSET:270,PKG TYPE:THT,SHPTYPE:IC,PITCH:5.575,PINC</span><span></span>
        </div>
      </section>
    </div>
    <footer class="status"><span>Station:MI</span><span></span><span></span></footer>
  </div>
</template>

<style>
body { margin: 0; background: #f0f0f0; }
</style>

<style scoped>
.app { height: 100vh; display: flex; flex-direction: column; overflow: hidden; background: #f0f0f0; color: #222; font: 8px/10px Roboto, "Noto Sans CJK SC", sans-serif; }
.app * { box-sizing: border-box; }
button { border: 0; padding: 0; margin: 0; background: none; color: inherit; font: inherit; }
h1, h2 { margin: 0; font: inherit; }
.ico { width: 10px; height: 10px; display: block; flex: none; }

.titlebar { height: 14px; flex: none; display: flex; align-items: center; background: #fff; color: #858585; padding-left: 1px; gap: 3px; font-family: "Noto Sans", sans-serif; }
.titlebar h1 { flex: 1; white-space: nowrap; }
.winbtns { display: flex; }
.winbtns button { width: 28px; height: 14px; display: grid; place-items: center; }
.winbtns svg { width: 8px; height: 8px; fill: none; stroke: #777; stroke-width: .8; }

.menubar { height: 13px; flex: none; display: flex; align-items: center; padding-left: 4px; gap: 8px; color: #555; }
.toolbar { height: 16px; flex: none; display: flex; align-items: center; padding-left: 2px; border: 1px solid #c6c6c6; border-left: 0; background: #f2f2f2; }
.tool { width: 14px; height: 13px; display: grid; place-items: center; flex: none; }
.tool.pressed { background: #f9f9f9; border: 1px solid #bcbcbc; border-right-color: #fff; border-bottom-color: #fff; }
.sep { width: 7px; height: 12px; flex: none; display: flex; justify-content: center; }
.sep::before { content: ""; width: 1px; background: #bdbdbd; }
.sep.slim { width: 4px; }
.caret { width: 12px; height: 13px; display: grid; place-items: center; }
.caret::before { content: ""; border: 3px solid transparent; border-top-color: #111; border-bottom: 0; }

.main { flex: 1; min-height: 0; display: flex; }
.side { width: 136px; flex: none; display: flex; flex-direction: column; padding: 1px 1px 1px 2px; gap: 2px; border-right: 1px solid #ccc; }
.bar, .tree, .props, .partsbox, .sel select, .status, .form { font-family: "DejaVu Sans Mono", "Noto Sans CJK SC", monospace; font-size: 6px; color: #111; }
.bar { height: 12px; flex: none; display: flex; align-items: center; gap: 3px; padding: 0 2px; background: #a9c9ef; border: 1px solid #6fa9dd; font-weight: bold; }
.bar i { flex: 1; }
.bar.station { gap: 3px; font-weight: normal; padding-right: 1px; }
.bar .wide { margin-right: 4px; }
.bar .green { color: #12a01c; }
.treebox { flex: 1; min-height: 0; display: flex; flex-direction: column; background: #fff; border: 1px solid #74b8e6; border-top-width: 2px; overflow: hidden; }
.tree { flex: 1; margin: 0; padding: 2px 0 0; list-style: none; overflow: hidden; }
.tree li { height: 10px; display: flex; align-items: center; white-space: nowrap; }
.tree .lines { flex: none; display: block; }
.tree span { margin-left: 7px; line-height: 8px; }
.tree .selected { background: #e3e3e3; outline: 1px solid #ccc; }
.hscroll { height: 11px; flex: none; display: flex; align-items: center; background: #fafafa; font-size: 10px; }
.hscroll span { width: 11px; text-align: center; color: #555; line-height: 8px; }
.hscroll b { width: 84px; height: 9px; background: #cdcdcd; }
.hscroll span:last-child { margin-left: auto; }

.form { flex: none; border: 1px solid #74b8e6; padding: 2px 1px 3px 3px; }
.top { display: flex; gap: 4px; }
.rows { flex: 1; }
.vtrack { width: 7px; margin: 0 1px 3px 0; border: 1px solid #74b8e6; background: #f6faff; }
.row { height: 15px; display: grid; grid-template-columns: 24px 1fr; column-gap: 2px; align-items: start; }
.row:has(.pm) { grid-template-columns: 24px 65px 1fr; }
.row label, .row .lbl { text-align: right; font-size: 7px; line-height: 15px; white-space: nowrap; }
.pm { display: flex; justify-content: space-around; padding: 2px 0 0 4px; }
.pm .ico { width: 9px; height: 9px; }
.sel { position: relative; display: block; height: 12px; }
.sel select { appearance: none; width: 100%; height: 12px; display: block; margin: 0; padding: 0 12px 2px 1px; border: 1px solid #a8a8a8; border-radius: 0; background: #fff; color: #111; }
.sel::after { content: ""; position: absolute; right: 1px; top: 1px; width: 10px; height: 10px; background: linear-gradient(#111, #111) 3px 4px / 4px 1px no-repeat, linear-gradient(#111, #111) 4px 5px / 2px 1px no-repeat, #ececec; border-right: 1px solid #888; border-bottom: 1px solid #888; pointer-events: none; }
.props { width: 126px; margin: 0 0 3px 1px; background: #fff; border: 1px solid #aaa; border-collapse: collapse; table-layout: fixed; }
.props th { text-align: left; font-weight: normal; padding: 0 0 0 3px; height: 11px; line-height: 9px; }
.props td { height: 11px; border-right: 1px solid #eee; border-top: 1px solid #eee; padding: 0; }
.row input[type="text"] { width: 91px; height: 12px; border: 1px solid #a8a8a8; background: #fff; padding: 0 2px; font: inherit; }
.row.angles { grid-template-columns: 24px 18px 23px 28px 1fr; align-items: center; height: 12px; }
.row.angles label { display: flex; align-items: center; gap: 2px; font-size: 6px; line-height: 9px; }
.row.angles .lbl { line-height: 12px; }
.angles input { appearance: none; width: 9px; height: 9px; margin: 0; flex: none; border: 1px solid #aaa; background: #fff; }
.row.last input[type="text"] { width: 51px; }

.work { flex: 1; min-width: 0; display: flex; flex-direction: column; padding: 3px 2px 0 3px; }
.canvas { flex: 1; position: relative; background: #fff; border-left: 4px solid #f4f3ee; overflow: hidden; }
.pcb { position: absolute; left: 367px; top: 40px; }
.info { height: 13px; flex: none; display: grid; grid-template-columns: 100px 82px 751px 1fr; }
.info span { overflow: hidden; white-space: nowrap; line-height: 11px; border: 1px solid #d4d4d4; border-right-color: #fff; border-bottom-color: #fff; padding-left: 1px; }
.status { height: 12px; flex: none; display: grid; grid-template-columns: 136px 81px 1fr; gap: 2px; padding-bottom: 1px; }
.status span { border: 1px solid #c3c3c3; padding-left: 2px; line-height: 9px; }

.dialog { position: absolute; left: 26px; top: 43px; width: 304px; height: 368px; display: flex; flex-direction: column; background: #f0f0f0; border: 1px solid #4a9bdc; }
.dialog > header { height: 18px; flex: none; display: flex; align-items: center; gap: 4px; padding: 0 5px; background: #0078d7; color: #fff; }
.dialog > header h2 { flex: 1; }
.dialog > header button svg { display: block; width: 8px; height: 8px; stroke: #fff; fill: none; }
.dtools { height: 17px; flex: none; margin: 1px 2px; display: flex; align-items: center; padding-left: 1px; border: 1px solid #c8c8c8; background: linear-gradient(#fff, #ebebeb); }
.dtools .tool { height: 14px; }
.dtools .caret ~ .tool { width: 18px; }
.dtools .tool.pressed { background: #cfe4f8; border: 1px solid #6aa6dd; }
.dbody { flex: 1; min-height: 0; display: flex; gap: 5px; padding: 0 4px 0 2px; }
.ops { width: 106px; display: flex; flex-direction: column; border: 1px solid #5cb0e2; background: #fff; }
.ops table { border-collapse: collapse; table-layout: fixed; width: 100%; }
.ops th, .ops td { padding: 0; text-align: left; font-weight: normal; height: 10px; line-height: 10px; overflow: hidden; white-space: nowrap; padding-left: 3px; }
.ops th { border-right: 1px solid #ccc; background: #f4f4f4; }
.ops td { background: #f0f0f0; font-size: 7px; height: 12px; }
.ops td:first-child { display: flex; align-items: center; padding-left: 2px; }
.ops th:nth-child(1) { width: 20px; }
.ops th:nth-child(2), .ops th:nth-child(3) { width: 24px; }
.ops th:nth-child(4) { width: 25px; }
.blank { flex: 1; display: grid; grid-template-columns: 20px 24px 24px 25px; background: repeating-linear-gradient(#fff 0 10px, #ededed 10px 11px, #fff 11px 20px, #ededed 20px 21px); }
.blank i { border-right: 1px solid #ededed; }
.partsbox { flex: 1; margin: 4px 0 1px; background: #fff; border: 1px solid #4f9fd8; }
.partsbox table { width: 168px; height: 198px; border-collapse: collapse; table-layout: fixed; }
.partsbox th, .partsbox td { border: 1px solid #4f9fd8; border-left-color: #8fc0e6; padding: 0 0 3px 1px; line-height: 8px; text-align: left; font-weight: normal; white-space: nowrap; overflow: hidden; }
.partsbox th { background: #a6c8ef; }
.partsbox th:nth-child(1) { width: 20px; }
.partsbox thead th:nth-child(2) { width: 51px; }
.partsbox thead th:nth-child(3) { width: 26px; }
.partsbox thead th:nth-child(4) { width: 20px; }
.partsbox .current { outline: 1px solid #777; outline-offset: -1px; }
.partsbox .img { padding: 0; }
.img b { display: block; width: 10px; height: 10px; margin: 0 auto; }
.dialog > footer { height: 14px; flex: none; margin: 0 2px 0; padding-left: 1px; line-height: 13px; border: 1px solid #d0d0d0; font-family: "Noto Sans", sans-serif; }

.steps { position: absolute; right: 8px; top: 13px; width: 104px; color: #111; }
.steps header { display: flex; align-items: center; justify-content: space-between; height: 14px; color: #888; padding-left: 1px; }
.steps header button { width: 12px; height: 12px; background: #ddd; color: #eee; line-height: 11px; }
.list { display: flex; flex-direction: column; gap: 2px; height: 227px; padding: 3px 1px 1px; border-right: 1px solid #aaa; border-bottom: 1px solid #ccc; background: #f0f0f0; font-family: "Liberation Mono", "Noto Sans CJK SC", monospace; }
.list button { flex: 1; display: flex; align-items: center; gap: 3px; padding-left: 3px; text-align: left; background: linear-gradient(#c3dbf8, #8fbbef); border: 1px solid #4f94d8; border-radius: 1px; box-shadow: inset 0 1px #dcebfb; }
.list button .ico { color: #0d9a1e; }
.list button.off { background: #a4c6ee; color: #8f9fb3; text-shadow: 1px 1px #d6e6f8; }
.list button.off .ico { color: #8b98a8; }
.list button.focus { border-color: #2583d8; box-shadow: inset 0 0 0 1px #7dbcf3; }
</style>
